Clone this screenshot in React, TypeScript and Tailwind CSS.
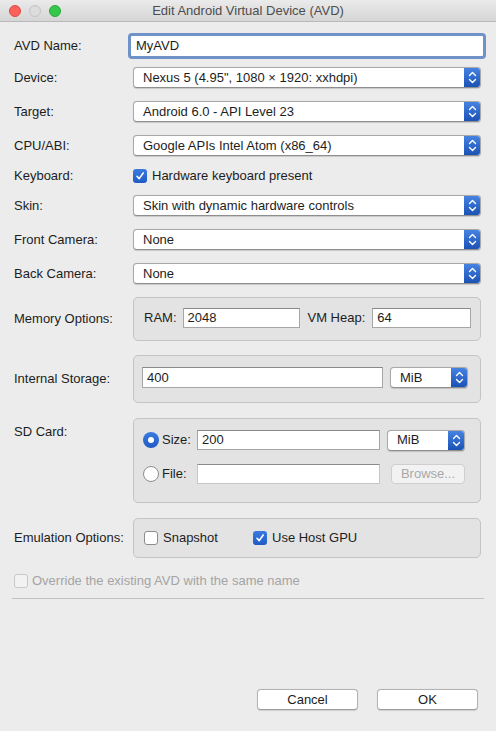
import React from 'react';

const font = { fontFamily: '"Liberation Sans", Arial, sans-serif' };

const Chevrons: React.FC = () => (
  <svg width="9" height="13" viewBox="0 0 9 13" fill="none">
    <path d="M1.5 4.5 L4.5 1.5 L7.5 4.5" stroke="white" strokeWidth="1.4" strokeLinecap="round" strokeLinejoin="round" />
    <path d="M1.5 8.5 L4.5 11.5 L7.5 8.5" stroke="white" strokeWidth="1.4" strokeLinecap="round" strokeLinejoin="round" />
  </svg>
);

const Select: React.FC<{ value: string; className?: string }> = ({ value, className = '' }) => (
  <div className={`flex h-[21px] items-stretch rounded-[4px] border border-[#a9a9a9] border-b-[#8e8e8e] bg-white shadow-[0_0.5px_1px_rgba(0,0,0,0.15)] overflow-hidden ${className}`}>
    <div className="flex-1 flex items-center pl-[9px] text-[13px] text-[#1d1d1d] truncate">{value}</div>
    <div className="w-[16px] flex items-center justify-center bg-gradient-to-b from-[#4583e3] to-[#1b52b5]">
      <Chevrons />
    </div>
  </div>
);

const TextInput: React.FC<{ value?: string; className?: string }> = ({ value = '', className = '' }) => (
  <div className={`flex items-center h-[20px] border border-[#a6a6a6] border-t-[#8a8a8a] bg-white px-[4px] text-[13px] text-[#1d1d1d] ${className}`}>
    {value}
  </div>
);

const Check: React.FC<{ checked?: boolean; disabled?: boolean }> = ({ checked, disabled }) =>
  checked ? (
    <div className="w-[14px] h-[14px] rounded-[3px] bg-gradient-to-b from-[#3b7be0] to-[#1f5bc4] flex items-center justify-center shrink-0">
      <svg width="10" height="10" viewBox="0 0 10 10" fill="none">
        <path d="M2 5.3 L4.2 7.6 L8.2 2" stroke="white" strokeWidth="1.6" strokeLinecap="round" strokeLinejoin="round" />
      </svg>
    </div>
  ) : (
    <div className={`w-[14px] h-[14px] rounded-[3px] border shrink-0 ${disabled ? 'border-[#c8c8c8] bg-[#f2f2f2]' : 'border-[#8c8c8c] bg-white'}`} />
  );

const Radio: React.FC<{ checked?: boolean }> = ({ checked }) =>
  checked ? (
    <div className="w-[16px] h-[16px] rounded-full bg-gradient-to-b from-[#3b7be0] to-[#1f5bc4] flex items-center justify-center shrink-0">
      <div className="w-[6px] h-[6px] rounded-full bg-white" />
    </div>
  ) : (
    <div className="w-[16px] h-[16px] rounded-full border border-[#8c8c8c] bg-white shrink-0" />
  );

const Row: React.FC<{ label: string; className?: string; children: React.ReactNode }> = ({ label, className = '', children }) => (
  <div className={`flex items-center pl-[14px] pr-[15px] ${className}`}>
    <div className="w-[119px] shrink-0 text-[13px] text-[#1d1d1d]">{label}</div>
    <div className="flex-1 h-full flex items-center">{children}</div>
  </div>
);

const Group: React.FC<{ className?: string; children: React.ReactNode }> = ({ className = '', children }) => (
  <div className={`flex-1 self-stretch rounded-[5px] border border-[#c4c4c4] bg-[#e3e3e3] ${className}`}>{children}</div>
);

const Button: React.FC<{ label: string }> = ({ label }) => (
  <button className="w-[101px] h-[21px] rounded-[4px] border border-[#b3b3b3] border-b-[#9a9a9a] bg-white text-[13px] text-[#1d1d1d] shadow-[0_0.5px_1px_rgba(0,0,0,0.12)]">
    {label}
  </button>
);

const App: React.FC = () => {
  return (
    <div className="w-[496px] h-[731px] bg-[#ececec] flex flex-col overflow-hidden" style={font}>
      {/* title bar */}
      <div className="relative h-[22px] shrink-0 flex items-center justify-center bg-gradient-to-b from-[#ebebeb] to-[#d5d5d5] border-b border-[#b9b9b9]">
        <div className="absolute left-[9px] top-[5px] flex gap-[8px]">
          <div className="w-[12px] h-[12px] rounded-full bg-[#fc605b] border border-[#de4a44]" />
          <div className="w-[12px] h-[12px] rounded-full bg-[#dcdcdc] border border-[#c4c4c4]" />
          <div className="w-[12px] h-[12px] rounded-full bg-[#34c84a] border border-[#27a93a]" />
        </div>
        <span className="text-[13px] text-[#4d4d4d]">Edit Android Virtual Device (AVD)</span>
      </div>

      <Row label="AVD Name:" className="mt-[11px] h-[26px]">
        <div className="flex-1 ml-[-5px] mr-[-5px] rounded-[4px] border-[3px] border-[#6f93c9] bg-white h-[26px] flex items-center pl-[5px] text-[13px] text-[#1d1d1d]">
          MyAVD
        </div>
      </Row>
      <Row label="Device:" className="mt-[8px] h-[21px]">
        <Select className="flex-1" value={'Nexus 5 (4.95", 1080 × 1920: xxhdpi)'} />
      </Row>
      <Row label="Target:" className="mt-[13px] h-[21px]">
        <Select className="flex-1" value="Android 6.0 - API Level 23" />
      </Row>
      <Row label="CPU/ABI:" className="mt-[13px] h-[21px]">
        <Select className="flex-1" value="Google APIs Intel Atom (x86_64)" />
      </Row>
      <Row label="Keyboard:" className="mt-[12px] h-[16px]">
        <div className="flex items-center gap-[5px] text-[13px] text-[#1d1d1d]">
          <Check checked />
          <span>Hardware keyboard present</span>
        </div>
      </Row>
      <Row label="Skin:" className="mt-[11px] h-[21px]">
        <Select className="flex-1" value="Skin with dynamic hardware controls" />
      </Row>
      <Row label="Front Camera:" className="mt-[13px] h-[21px]">
        <Select className="flex-1" value="None" />
      </Row>
      <Row label="Back Camera:" className="mt-[13px] h-[21px]">
        <Select className="flex-1" value="None" />
      </Row>

      <Row label="Memory Options:" className="mt-[13px] h-[44px]">
        <Group className="flex items-center pl-[10px] pr-[9px] pb-[3px] text-[13px] text-[#1d1d1d]">
          <span className="mr-[6px]">RAM:</span>
          <TextInput value="2048" className="w-[117px]" />
          <span className="ml-[8px] mr-[7px]">VM Heap:</span>
          <TextInput value="64" className="flex-1" />
        </Group>
      </Row>

      <Row label="Internal Storage:" className="mt-[14px] h-[48px]">
        <Group className="flex items-center pl-[8px] pr-[12px] pb-[3px]">
          <TextInput value="400" className="w-[241px] h-[21px]" />
          <Select className="ml-[7px] flex-1 h-[20px]" value="MiB" />
        </Group>
      </Row>

      <div className="flex pl-[14px] pr-[15px] mt-[15px] h-[85px]">
        <div className="w-[119px] shrink-0 pt-[4px] text-[13px] text-[#1d1d1d]">SD Card:</div>
        <Group className="flex flex-col pl-[9px] pr-[15px] pt-[11px] text-[13px] text-[#1d1d1d]">
          <div className="flex items-center h-[20px]">
            <Radio checked />
            <span className="ml-[3px] w-[35px]">Size:</span>
            <TextInput value="200" className="w-[183px]" />
            <Select className="ml-[7px] flex-1 h-[20px]" value="MiB" />
          </div>
          <div className="flex items-center h-[20px] mt-[14px]">
            <Radio />
            <span className="ml-[3px] w-[35px]">File:</span>
            <TextInput className="w-[183px] border-[#c6c6c6]" />
            <div className="ml-[11px] flex-1 h-[20px] rounded-[4px] border border-[#cfcfcf] bg-[#f2f2f2] flex items-center justify-center text-[13px] text-[#a8a8a8]">
              Browse...
            </div>
          </div>
        </Group>
      </div>

      <Row label="Emulation Options:" className="mt-[15px] h-[40px]">
        <Group className="flex items-center pl-[10px] pb-[1px] text-[13px] text-[#1d1d1d]">
          <Check />
          <span className="ml-[5px] w-[90px]">Snapshot</span>
          <Check checked />
          <span className="ml-[5px]">Use Host GPU</span>
        </Group>
      </Row>

      <div className="mt-[16px] h-[14px] pl-[14px] flex items-center gap-[4px] text-[13px] text-[#a4a4a4]">
        <Check disabled />
        <span>Override the existing AVD with the same name</span>
      </div>

      <div className="mt-[10px] mx-[12px] h-px bg-[#c2c2c2]" />

      <div className="mt-[90px] flex justify-end gap-[19px] pr-[18px]">
        <Button label="Cancel" />
        <Button label="OK" />
      </div>
    </div>
  );
};

export default App;
